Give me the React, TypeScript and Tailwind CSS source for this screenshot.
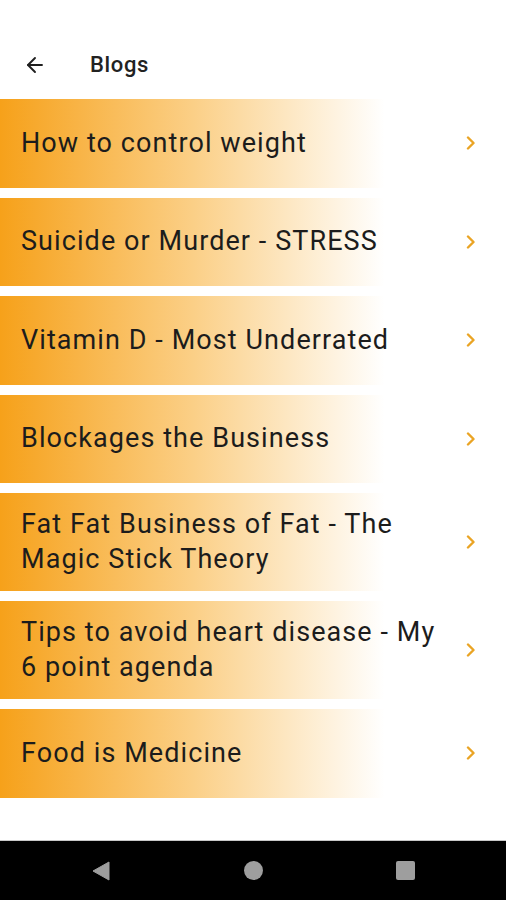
import { ArrowLeft } from "lucide-react";

const blogs = [
  "How to control weight",
  "Suicide or Murder - STRESS",
  "Vitamin D - Most Underrated",
  "Blockages the Business",
  "Fat Fat Business of Fat - The Magic Stick Theory",
  "Tips to avoid heart disease - My 6 point agenda",
  "Food is Medicine",
];

function Chevron() {
  return (
    <svg width="10" height="14" viewBox="0 0 10 14" className="shrink-0">
      <path
        d="M2 1.5 L7.5 7 L2 12.5"
        fill="none"
        stroke="#eaa424"
        strokeWidth="2.4"
        strokeLinecap="round"
        strokeLinejoin="round"
      />
    </svg>
  );
}

function BlogRow({ title }: { title: string }) {
  return (
    <div className="flex min-h-[88.5px] items-center bg-[linear-gradient(90deg,#f6a11a_0%,#fbcf86_38%,#ffffff_76%)] pl-[21px] pr-[30px] py-[14px]">
      <div className="flex-1 pr-[14px] text-[27px] leading-[35px] tracking-[0.04em] text-[#1c1c1c]">
        {title}
      </div>
      <Chevron />
    </div>
  );
}

export default function App() {
  return (
    <div
      className="flex h-[900px] w-[506px] flex-col bg-white"
      style={{ fontFamily: "Roboto, 'Noto Sans', sans-serif" }}
    >
      <div className="h-[30px]" />
      <div className="flex h-[69px] items-center">
        <ArrowLeft size={24} strokeWidth={1.9} className="ml-[23px] text-[#1f1f1f]" />
        <div className="ml-[43px] text-[22px] font-medium tracking-[0.03em] text-[#222]">Blogs</div>
      </div>
      <div className="flex flex-col gap-[10px]">
        {blogs.map((b) => (
          <BlogRow key={b} title={b} />
        ))}
      </div>
      <div className="flex-1" />
      <div className="flex h-[60px] items-center justify-between border-t border-[#c8c8c8] bg-black pl-[91px] pr-[91px]">
        <svg width="20" height="20" viewBox="0 0 20 20">
          <path d="M18 1 L18 19 L2 10 Z" fill="#9e9e9e" strokeLinejoin="round" stroke="#9e9e9e" strokeWidth="1" />
        </svg>
        <div className="h-[19px] w-[19px] rounded-full bg-[#9e9e9e]" />
        <div className="h-[19px] w-[19px] rounded-[2px] bg-[#9e9e9e]" />
      </div>
    </div>
  );
}
